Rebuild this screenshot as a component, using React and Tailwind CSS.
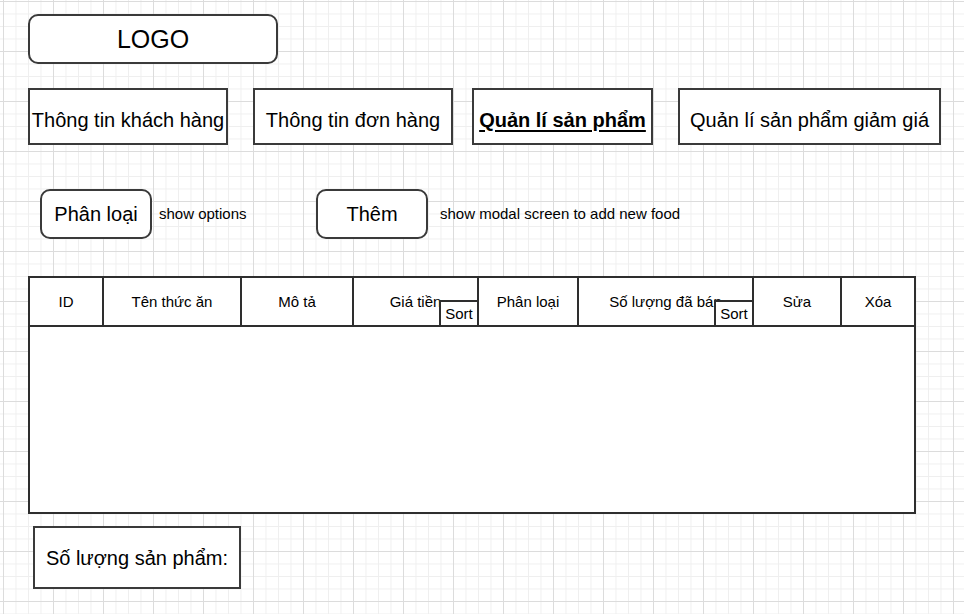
import React from "react";

const navItems = [
  { label: "Thông tin khách hàng", w: "w-[200px]", ml: "ml-0" },
  { label: "Thông tin đơn hàng", w: "w-[200px]", ml: "ml-[25px]" },
  { label: "Quản lí sản phẩm", w: "w-[181px]", ml: "ml-[19px]", active: true },
  { label: "Quản lí sản phẩm giảm giá", w: "w-[263px]", ml: "ml-[25px]" },
];

const columns = [
  { label: "ID", w: "w-[74px]" },
  { label: "Tên thức ăn", w: "w-[138px]" },
  { label: "Mô tả", w: "w-[112px]" },
  { label: "Giá tiền", w: "w-[125px]", sort: true },
  { label: "Phân loại", w: "w-[100px]" },
  { label: "Số lượng đã bán", w: "w-[175px]", sort: true },
  { label: "Sửa", w: "w-[88px]" },
  { label: "Xóa", w: "w-[72px]", last: true },
];

function HeaderCell({ col }) {
  return (
    <div
      className={`relative h-full flex items-center justify-center overflow-hidden whitespace-nowrap ${col.w} ${
        col.last ? "" : "border-r-2 border-[#2e2e2e]"
      }`}
    >
      <span className="mt-[1px]">{col.label}</span>
      {col.sort && (
        <div className="absolute right-0 bottom-0 w-[38px] h-[25px] bg-white border-t-2 border-l-2 border-[#2e2e2e] flex items-center justify-center pt-[2px]">
          Sort
        </div>
      )}
    </div>
  );
}

export default function App() {
  return (
    <div className="w-[964px] h-[614px] overflow-hidden bg-white bg-[linear-gradient(to_right,#dcdcdc_1px,transparent_1px),linear-gradient(to_bottom,#dcdcdc_1px,transparent_1px),linear-gradient(to_right,#efefef_1px,transparent_1px),linear-gradient(to_bottom,#efefef_1px,transparent_1px)] bg-[size:50px_50px,50px_50px,12.5px_12.5px,12.5px_12.5px] bg-[position:3px_1px] font-['Liberation_Sans',Arial,sans-serif] text-black">
      {/* logo */}
      <div className="ml-[28px] pt-[14px]">
        <div className="w-[250px] h-[50px] rounded-[10px] border-2 border-[#3a3a3a] bg-white flex items-center justify-center text-[25px] pt-[2px]">
          LOGO
        </div>
      </div>

      {/* nav */}
      <div className="flex ml-[28px] mt-[24px] h-[57px]">
        {navItems.map((n) => (
          <div
            key={n.label}
            className={`${n.w} ${n.ml} h-full border-2 border-[#3a3a3a] bg-white flex items-center justify-center whitespace-nowrap text-[20px] pt-[6px] ${
              n.active ? "font-bold underline underline-offset-[3px]" : ""
            }`}
          >
            {n.label}
          </div>
        ))}
      </div>

      {/* actions */}
      <div className="flex items-center ml-[40px] mt-[44px] h-[50px]">
        <div className="flex items-center w-[276px] h-full">
          <div className="w-[112px] h-full rounded-[10px] border-2 border-[#3a3a3a] bg-white flex items-center justify-center text-[20px]">
            Phân loại
          </div>
          <span className="ml-[7px] text-[15px] whitespace-nowrap">show options</span>
        </div>
        <div className="w-[112px] h-full rounded-[10px] border-2 border-[#3a3a3a] bg-white flex items-center justify-center text-[20px]">
          Thêm
        </div>
        <span className="ml-[12px] text-[15px] whitespace-nowrap">show modal screen to add new food</span>
      </div>

      {/* table */}
      <div className="ml-[28px] mt-[37px] w-[888px] h-[238px] border-2 border-[#2e2e2e] bg-white flex flex-col">
        <div className="flex h-[49px] border-b-2 border-[#2e2e2e] text-[15px]">
          {columns.map((c) => (
            <HeaderCell key={c.label} col={c} />
          ))}
        </div>
        <div className="flex-1" />
      </div>

      {/* footer count */}
      <div className="ml-[33px] mt-[12px] w-[208px] h-[63px] border-2 border-[#3a3a3a] bg-white flex items-center justify-center text-[20px] whitespace-nowrap">
        Số lượng sản phẩm:
      </div>
    </div>
  );
}
